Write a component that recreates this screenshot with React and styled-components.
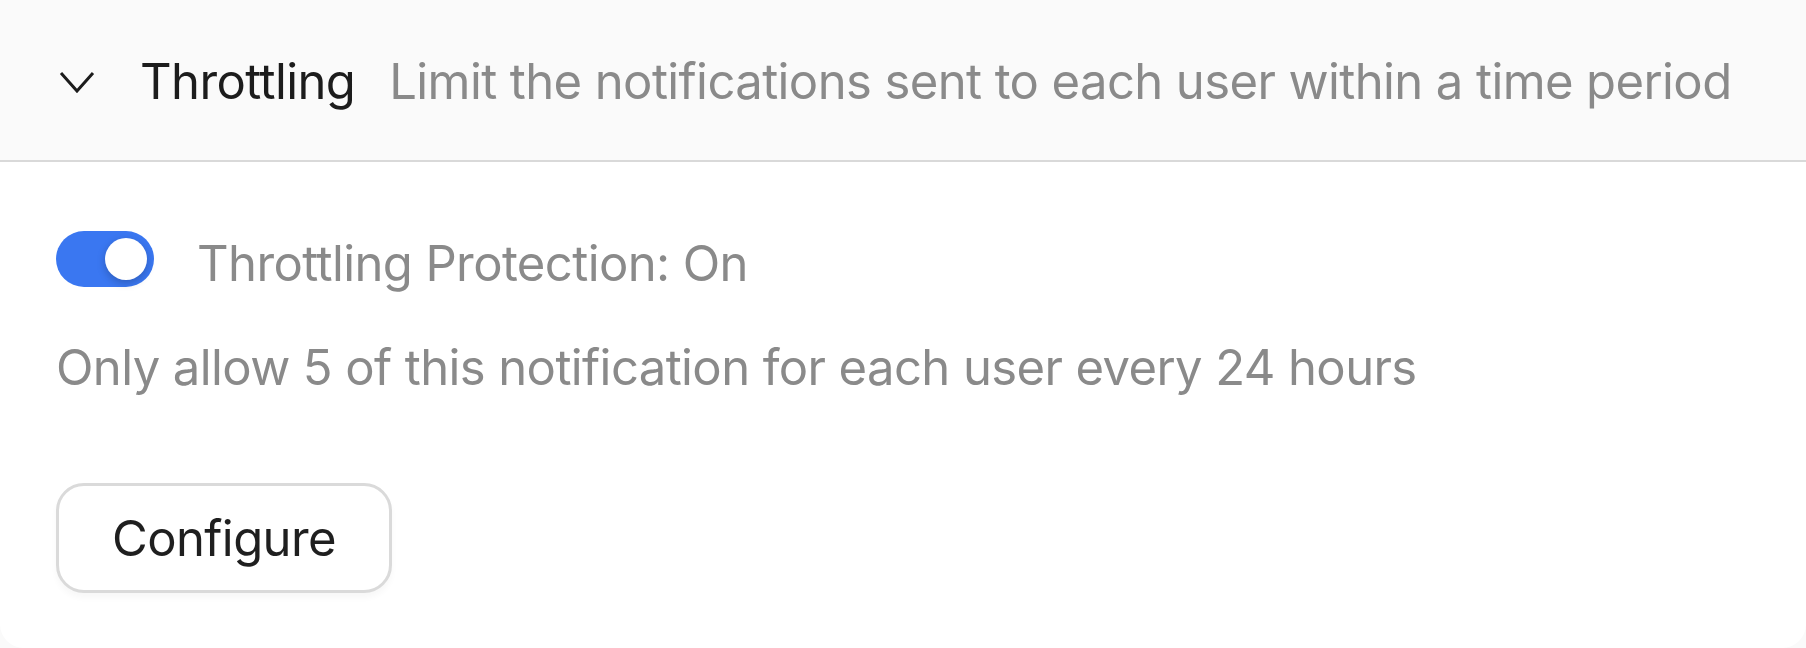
import React, { useState } from "react";
import styled, { createGlobalStyle } from "styled-components";

const GlobalStyle = createGlobalStyle`
  html, body {
    margin: 0;
    padding: 0;
    background: #fafafa;
    font-family: Inter, "Noto Sans", "Liberation Sans", sans-serif;
  }
`;

const Card = styled.section`
  background: #ffffff;
  border-radius: 0 0 24px 24px;
  height: 648px;
  overflow: hidden;
  display: flex;
  flex-direction: column;
`;

const Header = styled.button`
  display: flex;
  align-items: center;
  height: 162px;
  padding: 4px 56px 0 59px;
  background: #fafafa;
  border: none;
  border-bottom: 2px solid #d9d9d9;
  font: inherit;
  text-align: left;
  white-space: nowrap;
  cursor: pointer;
  flex-shrink: 0;
`;

const Chevron = styled.svg`
  width: 36px;
  height: 22px;
  margin-right: 45px;
  transform: ${(p) => (p.$open ? "none" : "rotate(-90deg)")};
`;

const Text = styled.span`
  font-size: 49px;
  line-height: 60px;
  letter-spacing: -0.6px;
  color: ${(p) => (p.$strong ? "#1c1c1c" : "#8a8a8a")};
`;

const Title = styled(Text)`
  margin-right: 34px;
`;

const Body = styled.div`
  display: flex;
  flex-direction: column;
  align-items: flex-start;
  padding: 69px 56px 56px;
`;

const ToggleRow = styled.label`
  display: flex;
  align-items: flex-start;
  gap: 43px;
  cursor: pointer;
`;

const Label = styled(Text)`
  padding-top: 3px;
`;

const Track = styled.span`
  position: relative;
  width: 98px;
  height: 56px;
  border-radius: 28px;
  background: ${(p) => (p.$on ? "#3a77f1" : "#d4d4d4")};
  flex-shrink: 0;
`;

const Knob = styled.span`
  position: absolute;
  top: 7px;
  left: ${(p) => (p.$on ? "49px" : "7px")};
  width: 42px;
  height: 42px;
  border-radius: 50%;
  background: #ffffff;
  box-shadow: 0 3px 8px rgba(0, 0, 0, 0.22);
`;

const Summary = styled.p`
  margin: 44px 0 0;
  font-size: 49px;
  line-height: 60px;
  letter-spacing: -0.6px;
  color: #8a8a8a;
`;

const Button = styled.button`
  margin-top: 85px;
  height: 110px;
  padding: 0 53px;
  border: 3px solid #dadada;
  border-radius: 28px;
  background: #ffffff;
  box-shadow: 0 5px 6px rgba(0, 0, 0, 0.03);
  font-family: inherit;
  font-size: 49px;
  letter-spacing: -0.6px;
  color: #1f1f1f;
  cursor: pointer;
`;

export default function App() {
  const [open, setOpen] = useState(true);
  const [on, setOn] = useState(true);

  return (
    <>
      <GlobalStyle />
      <Card>
        <Header onClick={() => setOpen((v) => !v)}>
          <Chevron $open={open} viewBox="0 0 36 22" fill="none">
            <path d="M2 2 L18 20 L34 2" stroke="#1c1c1c" strokeWidth="3" strokeLinejoin="miter" />
          </Chevron>
          <Title $strong>Throttling</Title>
          <Text>Limit the notifications sent to each user within a time period</Text>
        </Header>
        {open && (
          <Body>
            <ToggleRow onClick={() => setOn((v) => !v)}>
              <Track $on={on}>
                <Knob $on={on} />
              </Track>
              <Label>Throttling Protection: {on ? "On" : "Off"}</Label>
            </ToggleRow>
            <Summary>Only allow 5 of this notification for each user every 24 hours</Summary>
            <Button>Configure</Button>
          </Body>
        )}
      </Card>
    </>
  );
}
